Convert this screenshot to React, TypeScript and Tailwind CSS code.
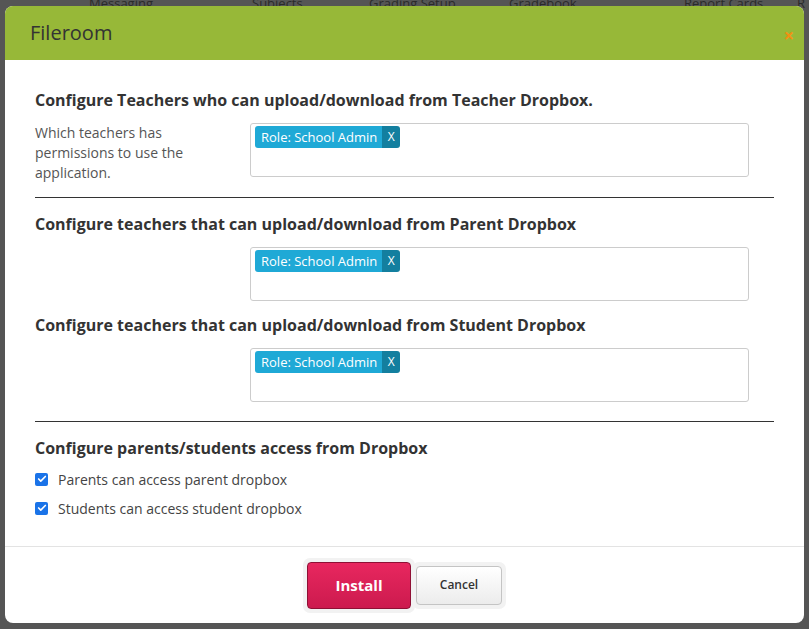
import { Check } from 'lucide-react';

const font = { fontFamily: '"Open Sans", "Liberation Sans", sans-serif' };

function Tag() {
  return (
    <div className="flex h-[22px] items-stretch overflow-hidden rounded-[3px] text-[13px] leading-[22px] text-white">
      <span className="bg-[#1fa9d6] pl-[6px] pr-[5px]">Role: School Admin</span>
      <span className="w-[18px] bg-[#137f9f] text-center text-[12px]">X</span>
    </div>
  );
}

function TagBox() {
  return (
    <div className="flex h-[54px] w-[499px] items-start rounded-[3px] border border-[#cccccc] px-[4px] pt-[2px]">
      <Tag />
    </div>
  );
}

function Heading({ children }: { children: React.ReactNode }) {
  return <h2 className="text-[16px] leading-[24px] font-bold text-[#333]">{children}</h2>;
}

function CheckRow({ label }: { label: string }) {
  return (
    <label className="flex h-[20px] items-center gap-[10px] text-[14px] text-[#444]">
      <span className="flex h-[13px] w-[13px] items-center justify-center rounded-[2px] bg-[#1a73e8]">
        <Check className="h-[10px] w-[10px] text-white" strokeWidth={4} />
      </span>
      {label}
    </label>
  );
}

export default function App() {
  const nav = [
    ['Messaging', 'left-[89px]'],
    ['Subjects', 'left-[252px]'],
    ['Grading Setup', 'left-[369px]'],
    ['Gradebook', 'left-[509px]'],
    ['Report Cards', 'left-[684px]'],
    ['R', 'left-[797px]'],
  ];

  return (
    <div className="relative h-[629px] w-[809px] overflow-hidden bg-[#555555]" style={font}>
      {/* dimmed app behind the modal */}
      {nav.map(([t, pos]) => (
        <span key={t} className={`absolute top-[-6px] ${pos} text-[13px] text-[#2a2a2a]`}>
          {t}
        </span>
      ))}

      <div className="absolute left-[5px] top-[6px] flex h-[617px] w-[799px] flex-col overflow-hidden rounded-[8px] bg-white">
        {/* Header */}
        <div className="flex h-[54px] shrink-0 items-center justify-between bg-[#97b838] pl-[25px] pr-[10px]">
          <h1 className="text-[20px] text-[#333]">Fileroom</h1>
          <span className="mt-[4px] text-[18px] leading-none font-bold text-[#f39012]">×</span>
        </div>

        {/* Body */}
        <div className="flex-1 px-[30px] pt-[28px]">
          <Heading>Configure Teachers who can upload/download from Teacher Dropbox.</Heading>
          <div className="mt-[11px] flex items-start">
            <p className="w-[215px] pr-[40px] text-[14px] leading-[20px] text-[#555]">
              Which teachers has permissions to use the application.
            </p>
            <TagBox />
          </div>
          <hr className="mt-[14px] border-t border-[#333]" />

          <div className="mt-[14px]">
            <Heading>Configure teachers that can upload/download from Parent Dropbox</Heading>
          </div>
          <div className="mt-[11px] pl-[215px]">
            <TagBox />
          </div>

          <div className="mt-[12px]">
            <Heading>Configure teachers that can upload/download from Student Dropbox</Heading>
          </div>
          <div className="mt-[11px] pl-[215px]">
            <TagBox />
          </div>
          <hr className="mt-[19px] border-t border-[#333]" />

          <div className="mt-[14px]">
            <Heading>Configure parents/students access from Dropbox</Heading>
          </div>
          <div className="mt-[9px] flex flex-col gap-[9px]">
            <CheckRow label="Parents can access parent dropbox" />
            <CheckRow label="Students can access student dropbox" />
          </div>
        </div>

        {/* Footer */}
        <div className="flex h-[77px] shrink-0 items-center justify-center border-t border-[#e3e3e3]">
          <div className="relative z-10 rounded-[7px] bg-[#f2f2f2] p-[4px]">
            <button className="h-[47px] w-[104px] rounded-[4px] border border-[#8f1035] bg-gradient-to-b from-[#e8275f] to-[#cc1a4e] text-[15px] font-bold text-white">
              Install
            </button>
          </div>
          <div className="-ml-[3px] rounded-[7px] bg-[#f2f2f2] p-[4px]">
            <button className="h-[39px] w-[86px] rounded-[4px] border border-[#c4c4c4] bg-gradient-to-b from-white to-[#ececec] text-[12px] font-semibold text-[#333]">
              Cancel
            </button>
          </div>
        </div>
      </div>
    </div>
  );
}
